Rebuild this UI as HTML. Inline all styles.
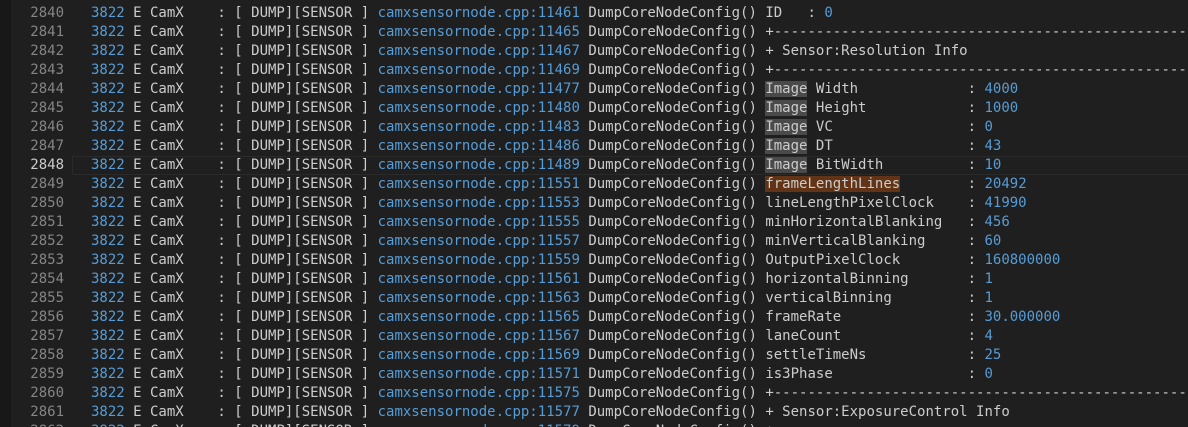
<!DOCTYPE html>
<html><head><meta charset="utf-8"><style>
html,body{margin:0;padding:0;width:1188px;height:427px;overflow:hidden;background:#1f1f1f;}
.strip{position:absolute;left:0;top:0;width:11px;height:427px;background:#181818;}
.ed{position:absolute;left:0;top:4px;width:1188px;height:423px;overflow:hidden;font-family:"DejaVu Sans Mono","Liberation Mono",monospace;font-size:14px;line-height:19px;color:#cccccc;}
.l{height:19px;position:relative;}
.n{display:inline-block;width:64px;text-align:right;color:#858585;}
.t{position:absolute;left:91px;top:0;white-space:pre;}
.b{color:#569cd6;}
.cur .n{color:#cccccc;}
.cur::before{content:"";position:absolute;left:72px;width:1120px;top:0;height:17px;border:1px solid #2a2a2a;}
.h{background:#4a4a4a;}
.o{background:#623315;}
</style></head><body><div class="strip"></div><div class="ed">
<div class="l"><span class="n">2840</span><span class="t"><span class="b">3822</span> E CamX    : [ DUMP][SENSOR ] <span class="b">camxsensornode.cpp:11461</span> DumpCoreNodeConfig() ID   : <span class="b">0</span></span></div>
<div class="l"><span class="n">2841</span><span class="t"><span class="b">3822</span> E CamX    : [ DUMP][SENSOR ] <span class="b">camxsensornode.cpp:11465</span> DumpCoreNodeConfig() +----------------------------------------------------</span></div>
<div class="l"><span class="n">2842</span><span class="t"><span class="b">3822</span> E CamX    : [ DUMP][SENSOR ] <span class="b">camxsensornode.cpp:11467</span> DumpCoreNodeConfig() + Sensor:Resolution Info</span></div>
<div class="l"><span class="n">2843</span><span class="t"><span class="b">3822</span> E CamX    : [ DUMP][SENSOR ] <span class="b">camxsensornode.cpp:11469</span> DumpCoreNodeConfig() +----------------------------------------------------</span></div>
<div class="l"><span class="n">2844</span><span class="t"><span class="b">3822</span> E CamX    : [ DUMP][SENSOR ] <span class="b">camxsensornode.cpp:11477</span> DumpCoreNodeConfig() <span class="h">Image</span> Width             : <span class="b">4000</span></span></div>
<div class="l"><span class="n">2845</span><span class="t"><span class="b">3822</span> E CamX    : [ DUMP][SENSOR ] <span class="b">camxsensornode.cpp:11480</span> DumpCoreNodeConfig() <span class="h">Image</span> Height            : <span class="b">1000</span></span></div>
<div class="l"><span class="n">2846</span><span class="t"><span class="b">3822</span> E CamX    : [ DUMP][SENSOR ] <span class="b">camxsensornode.cpp:11483</span> DumpCoreNodeConfig() <span class="h">Image</span> VC                : <span class="b">0</span></span></div>
<div class="l"><span class="n">2847</span><span class="t"><span class="b">3822</span> E CamX    : [ DUMP][SENSOR ] <span class="b">camxsensornode.cpp:11486</span> DumpCoreNodeConfig() <span class="h">Image</span> DT                : <span class="b">43</span></span></div>
<div class="l cur"><span class="n">2848</span><span class="t"><span class="b">3822</span> E CamX    : [ DUMP][SENSOR ] <span class="b">camxsensornode.cpp:11489</span> DumpCoreNodeConfig() <span class="h">Image</span> BitWidth          : <span class="b">10</span></span></div>
<div class="l"><span class="n">2849</span><span class="t"><span class="b">3822</span> E CamX    : [ DUMP][SENSOR ] <span class="b">camxsensornode.cpp:11551</span> DumpCoreNodeConfig() <span class="o">frameLengthLines</span>        : <span class="b">20492</span></span></div>
<div class="l"><span class="n">2850</span><span class="t"><span class="b">3822</span> E CamX    : [ DUMP][SENSOR ] <span class="b">camxsensornode.cpp:11553</span> DumpCoreNodeConfig() lineLengthPixelClock    : <span class="b">41990</span></span></div>
<div class="l"><span class="n">2851</span><span class="t"><span class="b">3822</span> E CamX    : [ DUMP][SENSOR ] <span class="b">camxsensornode.cpp:11555</span> DumpCoreNodeConfig() minHorizontalBlanking   : <span class="b">456</span></span></div>
<div class="l"><span class="n">2852</span><span class="t"><span class="b">3822</span> E CamX    : [ DUMP][SENSOR ] <span class="b">camxsensornode.cpp:11557</span> DumpCoreNodeConfig() minVerticalBlanking     : <span class="b">60</span></span></div>
<div class="l"><span class="n">2853</span><span class="t"><span class="b">3822</span> E CamX    : [ DUMP][SENSOR ] <span class="b">camxsensornode.cpp:11559</span> DumpCoreNodeConfig() OutputPixelClock        : <span class="b">160800000</span></span></div>
<div class="l"><span class="n">2854</span><span class="t"><span class="b">3822</span> E CamX    : [ DUMP][SENSOR ] <span class="b">camxsensornode.cpp:11561</span> DumpCoreNodeConfig() horizontalBinning       : <span class="b">1</span></span></div>
<div class="l"><span class="n">2855</span><span class="t"><span class="b">3822</span> E CamX    : [ DUMP][SENSOR ] <span class="b">camxsensornode.cpp:11563</span> DumpCoreNodeConfig() verticalBinning         : <span class="b">1</span></span></div>
<div class="l"><span class="n">2856</span><span class="t"><span class="b">3822</span> E CamX    : [ DUMP][SENSOR ] <span class="b">camxsensornode.cpp:11565</span> DumpCoreNodeConfig() frameRate               : <span class="b">30.000000</span></span></div>
<div class="l"><span class="n">2857</span><span class="t"><span class="b">3822</span> E CamX    : [ DUMP][SENSOR ] <span class="b">camxsensornode.cpp:11567</span> DumpCoreNodeConfig() laneCount               : <span class="b">4</span></span></div>
<div class="l"><span class="n">2858</span><span class="t"><span class="b">3822</span> E CamX    : [ DUMP][SENSOR ] <span class="b">camxsensornode.cpp:11569</span> DumpCoreNodeConfig() settleTimeNs            : <span class="b">25</span></span></div>
<div class="l"><span class="n">2859</span><span class="t"><span class="b">3822</span> E CamX    : [ DUMP][SENSOR ] <span class="b">camxsensornode.cpp:11571</span> DumpCoreNodeConfig() is3Phase                : <span class="b">0</span></span></div>
<div class="l"><span class="n">2860</span><span class="t"><span class="b">3822</span> E CamX    : [ DUMP][SENSOR ] <span class="b">camxsensornode.cpp:11575</span> DumpCoreNodeConfig() +----------------------------------------------------</span></div>
<div class="l"><span class="n">2861</span><span class="t"><span class="b">3822</span> E CamX    : [ DUMP][SENSOR ] <span class="b">camxsensornode.cpp:11577</span> DumpCoreNodeConfig() + Sensor:ExposureControl Info</span></div>
<div class="l"><span class="n">2862</span><span class="t"><span class="b">3822</span> E CamX    : [ DUMP][SENSOR ] <span class="b">camxsensornode.cpp:11579</span> DumpCoreNodeConfig() +----------------------------------------------------</span></div>
</div></body></html>
